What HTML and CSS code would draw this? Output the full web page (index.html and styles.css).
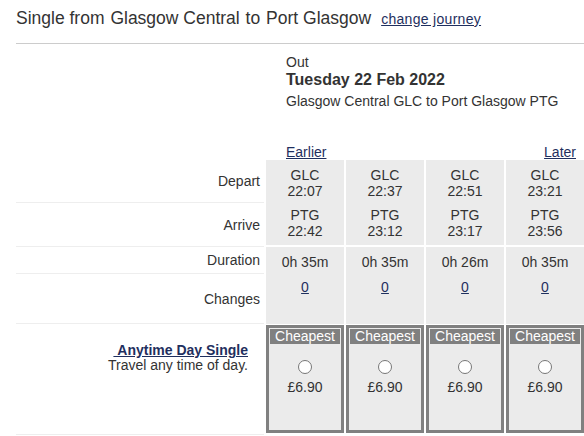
FILE: index.html
```html
<!doctype html>
<html lang="en">
<head>
	<meta charset="UTF-8" />
	<title>Journey results</title>
<link rel="stylesheet" href="styles.css">
</head>
<body>
	<section id="wrap">
		<div class="title">
			<h1>Single from <span class="stn">Glasgow Central</span> to <span class="stn">Port Glasgow</span></h1>
			<a href="javascript:;" class="change">change journey</a>
		</div>
		<div class="grid">
			<div class="blank"></div>
			<div class="out">
				<p class="dir">Out</p>
				<p class="date">Tuesday 22 Feb 2022</p>
				<p class="route">Glasgow Central GLC to Port Glasgow PTG</p>
			</div>

			<div class="blank"></div>
			<div class="nav">
				<a href="javascript:;">Earlier</a>
				<a href="javascript:;">Later</a>
			</div>

			<div class="label">Depart</div>
			<div class="cell">GLC<br/>22:07</div>
			<div class="cell">GLC<br/>22:37</div>
			<div class="cell">GLC<br/>22:51</div>
			<div class="cell">GLC<br/>23:21</div>

			<div class="label">Arrive</div>
			<div class="cell arr">PTG<br/>22:42</div>
			<div class="cell arr">PTG<br/>23:12</div>
			<div class="cell arr">PTG<br/>23:17</div>
			<div class="cell arr">PTG<br/>23:56</div>

			<div class="label">Duration</div>
			<div class="cell dur">0h 35m</div>
			<div class="cell dur">0h 35m</div>
			<div class="cell dur">0h 26m</div>
			<div class="cell dur">0h 35m</div>

			<div class="label">Changes</div>
			<div class="cell chg"><a href="javascript:;">0</a></div>
			<div class="cell chg"><a href="javascript:;">0</a></div>
			<div class="cell chg"><a href="javascript:;">0</a></div>
			<div class="cell chg"><a href="javascript:;">0</a></div>

			<div class="label fare">
				<a href="javascript:;">&nbsp;Anytime Day Single</a>
				<span>Travel any time of day.</span>
			</div>
			<div class="price">
				<div class="box"><p>Cheapest</p><i></i><span>£6.90</span></div>
			</div>
			<div class="price">
				<div class="box"><p>Cheapest</p><i></i><span>£6.90</span></div>
			</div>
			<div class="price">
				<div class="box"><p>Cheapest</p><i></i><span>£6.90</span></div>
			</div>
			<div class="price">
				<div class="box"><p>Cheapest</p><i></i><span>£6.90</span></div>
			</div>
		</div>
	</section>
</body>
</html>
```

FILE: styles.css
```css
*{
	margin: 0;
	padding: 0;
}
body{
	font-family: "Liberation Sans", Arial, sans-serif;
	font-size: 14px;
	color: #333;
	background: #fff;
}
a{
	color: #1f2f5e;
}
#wrap{
	padding-left: 16px;
}
.title{
	display: flex;
	align-items: baseline;
	height: 44px;
	padding-top: 6px;
	box-sizing: border-box;
	border-bottom: 1px solid #ccc;
}
.title h1{
	font-size: 17.5px;
	font-weight: normal;
	line-height: 24px;
}
.stn{
	margin: 0 1px;
}
.change{
	font-size: 14px;
	letter-spacing: 0.3px;
	margin-left: 9px;
}
.grid{
	display: grid;
	grid-template-columns: 248px repeat(4, 78px);
	column-gap: 2px;
}
.out{
	grid-column: 2 / 6;
	padding: 10px 0 0 20px;
	height: 100px;
	box-sizing: border-box;
}
.dir{
	line-height: 16px;
}
.date{
	font-size: 16px;
	font-weight: bold;
	line-height: 19px;
}
.route{
	line-height: 18px;
	margin-top: 3px;
}
.nav{
	grid-column: 2 / 6;
	display: flex;
	justify-content: space-between;
	padding: 0 8px 0 20px;
	line-height: 16px;
	height: 16px;
}
.label{
	display: flex;
	align-items: center;
	justify-content: flex-end;
	padding-right: 4px;
	border-bottom: 1px solid #eee;
}
.cell{
	background: #ebebeb;
	text-align: center;
	line-height: 16px;
	padding: 7px 0 2px;
	height: 43px;
	box-sizing: border-box;
}
.arr{
	height: 44px;
	padding-top: 4px;
	border-bottom: 2px solid #fff;
}
.dur{
	height: 27px;
	padding: 7px 0 0;
}
.chg{
	height: 50px;
	padding: 5px 0 0;
}
.label.fare{
	flex-direction: column;
	align-items: flex-end;
	justify-content: flex-start;
	padding: 19px 16px 0 0;
	line-height: 15px;
}
.fare a{
	font-weight: bold;
}
.price{
	padding: 1px 0 2px;
}
.box{
	height: 108px;
	border: 3px solid #808080;
	padding: 1px;
	box-sizing: border-box;
	background: #ebebeb;
	text-align: center;
}
.box p{
	background: #808080;
	color: #fff;
	line-height: 15px;
}
.box i{
	display: block;
	width: 12px;
	height: 12px;
	margin: 16px auto 0;
	border: 1px solid #767676;
	border-radius: 50%;
	background: #fff;
}
.box span{
	display: block;
	line-height: 18px;
	margin-top: 4px;
}
```
